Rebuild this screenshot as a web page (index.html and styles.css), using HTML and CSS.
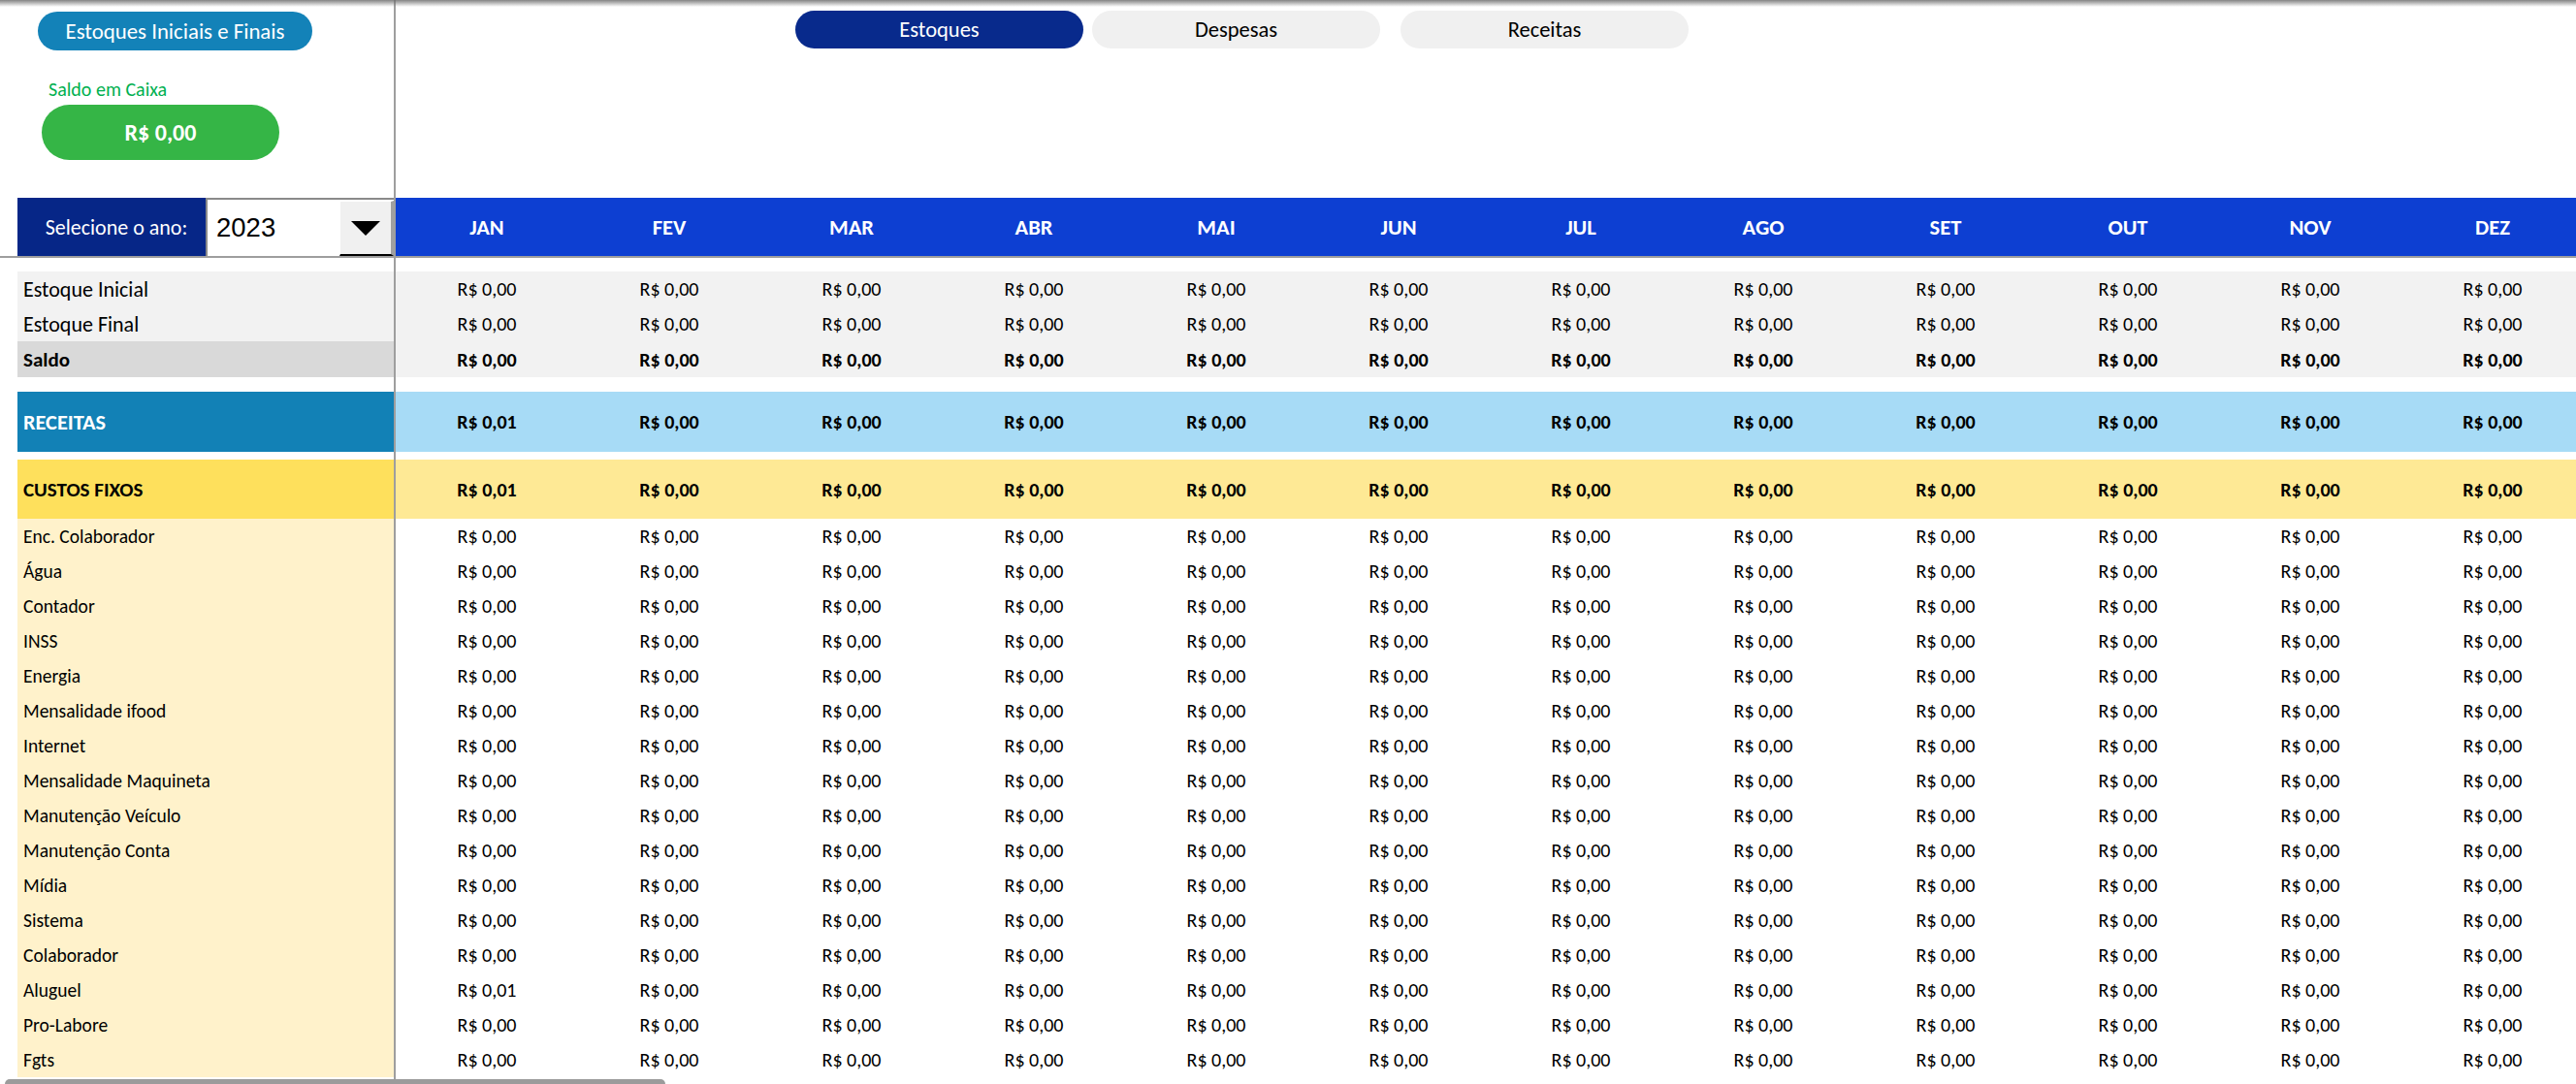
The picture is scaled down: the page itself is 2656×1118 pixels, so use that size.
FILE: index.html
```html
<!DOCTYPE html>
<html lang="pt-BR">
<head>
<meta charset="utf-8">
<title>Estoques</title>
<link rel="stylesheet" href="styles.css">
</head>
<body>
<div class="sheet">
  <div class="pane pane-tl">
    <div class="btn-iniciais">Estoques Iniciais e Finais</div>
    <div class="caixa-label">Saldo em Caixa</div>
    <div class="caixa-value">R$ 0,00</div>
    <div class="year-bar">
      <div class="year-label">Selecione o ano:</div>
      <div class="year-select">
        <div class="year-value">2023</div>
        <div class="year-btn"><span class="tri"></span></div>
      </div>
    </div>
  </div>
  <div class="pane pane-tr">
    <div class="nav">
      <div class="nav-btn active">Estoques</div>
      <div class="nav-btn">Despesas</div>
      <div class="nav-btn wide-gap">Receitas</div>
    </div>
    <div class="months">
      <div>JAN</div><div>FEV</div><div>MAR</div><div>ABR</div><div>MAI</div><div>JUN</div>
      <div>JUL</div><div>AGO</div><div>SET</div><div>OUT</div><div>NOV</div><div>DEZ</div>
    </div>
  </div>
  <div class="pane pane-bl">
    <div class="lrow est">Estoque Inicial</div>
    <div class="lrow est">Estoque Final</div>
    <div class="lrow saldo">Saldo</div>
    <div class="lrow rec">RECEITAS</div>
    <div class="lrow cus">CUSTOS FIXOS</div>
    <div class="lrow det">Enc. Colaborador</div>
    <div class="lrow det">Água</div>
    <div class="lrow det">Contador</div>
    <div class="lrow det">INSS</div>
    <div class="lrow det">Energia</div>
    <div class="lrow det">Mensalidade ifood</div>
    <div class="lrow det">Internet</div>
    <div class="lrow det">Mensalidade Maquineta</div>
    <div class="lrow det">Manutenção Veículo</div>
    <div class="lrow det">Manutenção Conta</div>
    <div class="lrow det">Mídia</div>
    <div class="lrow det">Sistema</div>
    <div class="lrow det">Colaborador</div>
    <div class="lrow det">Aluguel</div>
    <div class="lrow det">Pro-Labore</div>
    <div class="lrow det">Fgts</div>
  </div>
  <div class="pane pane-br">
    <div class="vrow est"><span>R$ 0,00</span><span>R$ 0,00</span><span>R$ 0,00</span><span>R$ 0,00</span><span>R$ 0,00</span><span>R$ 0,00</span><span>R$ 0,00</span><span>R$ 0,00</span><span>R$ 0,00</span><span>R$ 0,00</span><span>R$ 0,00</span><span>R$ 0,00</span></div>
    <div class="vrow est"><span>R$ 0,00</span><span>R$ 0,00</span><span>R$ 0,00</span><span>R$ 0,00</span><span>R$ 0,00</span><span>R$ 0,00</span><span>R$ 0,00</span><span>R$ 0,00</span><span>R$ 0,00</span><span>R$ 0,00</span><span>R$ 0,00</span><span>R$ 0,00</span></div>
    <div class="vrow saldo"><span>R$ 0,00</span><span>R$ 0,00</span><span>R$ 0,00</span><span>R$ 0,00</span><span>R$ 0,00</span><span>R$ 0,00</span><span>R$ 0,00</span><span>R$ 0,00</span><span>R$ 0,00</span><span>R$ 0,00</span><span>R$ 0,00</span><span>R$ 0,00</span></div>
    <div class="vrow rec"><span>R$ 0,01</span><span>R$ 0,00</span><span>R$ 0,00</span><span>R$ 0,00</span><span>R$ 0,00</span><span>R$ 0,00</span><span>R$ 0,00</span><span>R$ 0,00</span><span>R$ 0,00</span><span>R$ 0,00</span><span>R$ 0,00</span><span>R$ 0,00</span></div>
    <div class="vrow cus"><span>R$ 0,01</span><span>R$ 0,00</span><span>R$ 0,00</span><span>R$ 0,00</span><span>R$ 0,00</span><span>R$ 0,00</span><span>R$ 0,00</span><span>R$ 0,00</span><span>R$ 0,00</span><span>R$ 0,00</span><span>R$ 0,00</span><span>R$ 0,00</span></div>
    <div class="vrow det"><span>R$ 0,00</span><span>R$ 0,00</span><span>R$ 0,00</span><span>R$ 0,00</span><span>R$ 0,00</span><span>R$ 0,00</span><span>R$ 0,00</span><span>R$ 0,00</span><span>R$ 0,00</span><span>R$ 0,00</span><span>R$ 0,00</span><span>R$ 0,00</span></div>
    <div class="vrow det"><span>R$ 0,00</span><span>R$ 0,00</span><span>R$ 0,00</span><span>R$ 0,00</span><span>R$ 0,00</span><span>R$ 0,00</span><span>R$ 0,00</span><span>R$ 0,00</span><span>R$ 0,00</span><span>R$ 0,00</span><span>R$ 0,00</span><span>R$ 0,00</span></div>
    <div class="vrow det"><span>R$ 0,00</span><span>R$ 0,00</span><span>R$ 0,00</span><span>R$ 0,00</span><span>R$ 0,00</span><span>R$ 0,00</span><span>R$ 0,00</span><span>R$ 0,00</span><span>R$ 0,00</span><span>R$ 0,00</span><span>R$ 0,00</span><span>R$ 0,00</span></div>
    <div class="vrow det"><span>R$ 0,00</span><span>R$ 0,00</span><span>R$ 0,00</span><span>R$ 0,00</span><span>R$ 0,00</span><span>R$ 0,00</span><span>R$ 0,00</span><span>R$ 0,00</span><span>R$ 0,00</span><span>R$ 0,00</span><span>R$ 0,00</span><span>R$ 0,00</span></div>
    <div class="vrow det"><span>R$ 0,00</span><span>R$ 0,00</span><span>R$ 0,00</span><span>R$ 0,00</span><span>R$ 0,00</span><span>R$ 0,00</span><span>R$ 0,00</span><span>R$ 0,00</span><span>R$ 0,00</span><span>R$ 0,00</span><span>R$ 0,00</span><span>R$ 0,00</span></div>
    <div class="vrow det"><span>R$ 0,00</span><span>R$ 0,00</span><span>R$ 0,00</span><span>R$ 0,00</span><span>R$ 0,00</span><span>R$ 0,00</span><span>R$ 0,00</span><span>R$ 0,00</span><span>R$ 0,00</span><span>R$ 0,00</span><span>R$ 0,00</span><span>R$ 0,00</span></div>
    <div class="vrow det"><span>R$ 0,00</span><span>R$ 0,00</span><span>R$ 0,00</span><span>R$ 0,00</span><span>R$ 0,00</span><span>R$ 0,00</span><span>R$ 0,00</span><span>R$ 0,00</span><span>R$ 0,00</span><span>R$ 0,00</span><span>R$ 0,00</span><span>R$ 0,00</span></div>
    <div class="vrow det"><span>R$ 0,00</span><span>R$ 0,00</span><span>R$ 0,00</span><span>R$ 0,00</span><span>R$ 0,00</span><span>R$ 0,00</span><span>R$ 0,00</span><span>R$ 0,00</span><span>R$ 0,00</span><span>R$ 0,00</span><span>R$ 0,00</span><span>R$ 0,00</span></div>
    <div class="vrow det"><span>R$ 0,00</span><span>R$ 0,00</span><span>R$ 0,00</span><span>R$ 0,00</span><span>R$ 0,00</span><span>R$ 0,00</span><span>R$ 0,00</span><span>R$ 0,00</span><span>R$ 0,00</span><span>R$ 0,00</span><span>R$ 0,00</span><span>R$ 0,00</span></div>
    <div class="vrow det"><span>R$ 0,00</span><span>R$ 0,00</span><span>R$ 0,00</span><span>R$ 0,00</span><span>R$ 0,00</span><span>R$ 0,00</span><span>R$ 0,00</span><span>R$ 0,00</span><span>R$ 0,00</span><span>R$ 0,00</span><span>R$ 0,00</span><span>R$ 0,00</span></div>
    <div class="vrow det"><span>R$ 0,00</span><span>R$ 0,00</span><span>R$ 0,00</span><span>R$ 0,00</span><span>R$ 0,00</span><span>R$ 0,00</span><span>R$ 0,00</span><span>R$ 0,00</span><span>R$ 0,00</span><span>R$ 0,00</span><span>R$ 0,00</span><span>R$ 0,00</span></div>
    <div class="vrow det"><span>R$ 0,00</span><span>R$ 0,00</span><span>R$ 0,00</span><span>R$ 0,00</span><span>R$ 0,00</span><span>R$ 0,00</span><span>R$ 0,00</span><span>R$ 0,00</span><span>R$ 0,00</span><span>R$ 0,00</span><span>R$ 0,00</span><span>R$ 0,00</span></div>
    <div class="vrow det"><span>R$ 0,00</span><span>R$ 0,00</span><span>R$ 0,00</span><span>R$ 0,00</span><span>R$ 0,00</span><span>R$ 0,00</span><span>R$ 0,00</span><span>R$ 0,00</span><span>R$ 0,00</span><span>R$ 0,00</span><span>R$ 0,00</span><span>R$ 0,00</span></div>
    <div class="vrow det"><span>R$ 0,01</span><span>R$ 0,00</span><span>R$ 0,00</span><span>R$ 0,00</span><span>R$ 0,00</span><span>R$ 0,00</span><span>R$ 0,00</span><span>R$ 0,00</span><span>R$ 0,00</span><span>R$ 0,00</span><span>R$ 0,00</span><span>R$ 0,00</span></div>
    <div class="vrow det"><span>R$ 0,00</span><span>R$ 0,00</span><span>R$ 0,00</span><span>R$ 0,00</span><span>R$ 0,00</span><span>R$ 0,00</span><span>R$ 0,00</span><span>R$ 0,00</span><span>R$ 0,00</span><span>R$ 0,00</span><span>R$ 0,00</span><span>R$ 0,00</span></div>
    <div class="vrow det"><span>R$ 0,00</span><span>R$ 0,00</span><span>R$ 0,00</span><span>R$ 0,00</span><span>R$ 0,00</span><span>R$ 0,00</span><span>R$ 0,00</span><span>R$ 0,00</span><span>R$ 0,00</span><span>R$ 0,00</span><span>R$ 0,00</span><span>R$ 0,00</span></div>
  </div>
  <div class="hscroll"></div>
</div>
</body>
</html>
```
FILE: styles.css
```css
* { box-sizing: border-box; margin: 0; padding: 0; }
html, body { width: 100%; height: 100%; }
body {
  font-family: Carlito, Calibri, Lato, "Liberation Sans", sans-serif;
  color: #000;
  background: #fff;
  overflow: hidden;
}

.sheet {
  position: relative;
  display: grid;
  grid-template-columns: 406px 1fr;
  grid-template-rows: 264px 1fr;
  gap: 2px;
  background: #9e9e9e;
  width: 2656px;
  height: 1118px;
  overflow: hidden;
}
.sheet::before {
  content: "";
  position: absolute;
  top: 0; left: 0; right: 0;
  height: 7px;
  background: linear-gradient(to bottom, rgba(110,110,110,0.85), rgba(255,255,255,0));
  z-index: 5;
}

.pane { background: #fff; overflow: hidden; min-width: 0; }

/* top-left pane */
.pane-tl { display: flex; flex-direction: column; align-items: flex-start; }
.btn-iniciais {
  margin: 12px 0 0 39px;
  width: 283px; height: 40px;
  border-radius: 20px;
  background: #1382b8;
  color: #fff;
  font-size: 22.8px;
  display: flex; align-items: center; justify-content: center;
}
.caixa-label {
  margin: 30px 0 0 50px;
  color: #00b050;
  font-size: 20px;
  line-height: 20px;
}
.caixa-value {
  margin: 6px 0 0 43px;
  width: 245px; height: 57px;
  border-radius: 29px;
  background: #35b546;
  color: #fff;
  font-size: 24px; font-weight: 700;
  display: flex; align-items: center; justify-content: center;
}
.year-bar {
  margin: auto 0 0 18px;
  width: 388px; height: 60px;
  display: flex;
}
.year-label {
  width: 194px;
  background: #062687;
  color: #fff;
  font-size: 22px;
  display: flex; align-items: center; justify-content: center;
  padding-left: 10px;
}
.year-select {
  flex: 1;
  display: flex;
  background: #fff;
  border-top: 2px solid #8a8a8a;
  border-left: 2px solid #8a8a8a;
}
.year-value {
  flex: 1;
  padding-left: 9px;
  font-family: "Liberation Sans", Arial, sans-serif;
  font-size: 27.5px;
  display: flex; align-items: center;
}
.year-btn {
  width: 56px;
  margin-top: 1px;
  background: #f0f0f0;
  border-top: 1px solid #fff;
  border-left: 1px solid #fff;
  border-right: 3px solid #a0a0a0;
  border-bottom: 2px solid #000;
  display: flex; align-items: center; justify-content: center;
}
.tri {
  width: 0; height: 0;
  border-left: 15px solid transparent;
  border-right: 15px solid transparent;
  border-top: 15px solid #000;
}

/* top-right pane */
.pane-tr { display: flex; flex-direction: column; }
.nav { display: flex; gap: 9px; margin: 11px 0 0 412px; }
.nav-btn {
  width: 297px; height: 39px;
  border-radius: 20px;
  background: #f0f0f0;
  color: #000;
  font-size: 22.5px;
  display: flex; align-items: center; justify-content: center;
}
.nav-btn.active { background: #082a8c; color: #fff; }
.nav-btn.wide-gap { margin-left: 12px; }
.months {
  margin-top: auto;
  height: 60px;
  background: #0d3fd2;
  display: grid;
  grid-template-columns: repeat(12, 188px);
  align-items: center;
  justify-items: center;
  color: #fff;
  font-size: 22.5px; font-weight: 700;
}

/* bottom panes */
.pane-bl, .pane-br { padding-top: 14px; }
.lrow {
  margin-left: 18px;
  padding-left: 6px;
  height: 36px;
  display: flex; align-items: center;
  font-size: 19.5px;
}
.vrow {
  height: 36px;
  display: grid;
  grid-template-columns: repeat(12, 188px);
  align-items: center;
  justify-items: center;
  font-size: 20px;
}
.lrow.est { background: #f2f2f2; font-size: 22px; }
.vrow.est { background: #f2f2f2; }
.lrow.saldo { background: #d9d9d9; font-weight: 700; height: 37px; font-size: 21px; }
.vrow.saldo { background: #f2f2f2; font-weight: 700; height: 37px; font-size: 20px; }
.lrow.rec, .vrow.rec { height: 62px; margin-top: 15px; font-weight: 700; }
.lrow.rec { background: #1281b6; color: #fff; font-size: 22.3px; }
.vrow.rec { background: #a7dbf6; font-size: 20px; }
.lrow.cus, .vrow.cus { height: 61px; margin-top: 8px; font-weight: 700; }
.lrow.cus { background: #fee05c; font-size: 21px; }
.vrow.cus { background: #fee995; font-size: 20px; }
.lrow.det { background: #fff2cb; }
.vrow.det { background: #fff; }

.hscroll {
  position: absolute;
  left: 5px; bottom: 0;
  width: 681px; height: 5px;
  border-radius: 5px 5px 0 0;
  background: #9b9b9b;
  z-index: 5;
}
```
